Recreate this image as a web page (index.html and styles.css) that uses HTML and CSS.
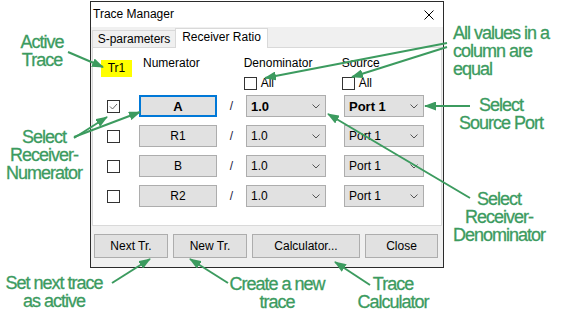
FILE: index.html
```html
<!DOCTYPE html>
<html lang="en">
<head>
    <meta charset="UTF-8">
    <title>Trace Manager</title>
    <link rel="stylesheet" href="styles.css">
</head>
<body>
<div class="stage">
    <div class="dialog">
        <div class="titlebar">
            <span class="title">Trace Manager</span>
            <svg class="close" width="10" height="10" viewBox="0 0 10 10">
                <path d="M0.5 0.5 L9.5 9.5 M9.5 0.5 L0.5 9.5" stroke="#000" stroke-width="1" fill="none"/>
            </svg>
        </div>

        <div class="tabs">
            <div class="tab">S-parameters</div>
            <div class="tab active">Receiver Ratio</div>
        </div>

        <div class="panel">
            <div class="head">
                <span class="trace-label">Tr1</span>
                <span class="col-num">Numerator</span>
                <div class="col col-den">
                    <span class="col-title">Denominator</span>
                    <label class="all"><span class="box"></span>All</label>
                </div>
                <div class="col col-src">
                    <span class="col-title">Source</span>
                    <label class="all"><span class="box"></span>All</label>
                </div>
            </div>

            <div class="rows">
                <div class="row selected">
                    <span class="box">
                        <svg width="11" height="11" viewBox="0 0 11 11"><path d="M2 5.5 L4.5 8 L9 3" stroke="#666" stroke-width="1" fill="none"/></svg>
                    </span>
                    <button class="recv focus">A</button>
                    <span class="slash">/</span>
                    <div class="select den"><span>1.0</span><svg class="chev" width="8" height="5" viewBox="0 0 8 5"><path d="M0.5 0.5 L4 4 L7.5 0.5" stroke="#555" fill="none"/></svg></div>
                    <div class="select src"><span>Port 1</span><svg class="chev" width="8" height="5" viewBox="0 0 8 5"><path d="M0.5 0.5 L4 4 L7.5 0.5" stroke="#555" fill="none"/></svg></div>
                </div>
                <div class="row">
                    <span class="box"></span>
                    <button class="recv">R1</button>
                    <span class="slash">/</span>
                    <div class="select den"><span>1.0</span><svg class="chev" width="8" height="5" viewBox="0 0 8 5"><path d="M0.5 0.5 L4 4 L7.5 0.5" stroke="#555" fill="none"/></svg></div>
                    <div class="select src"><span>Port 1</span><svg class="chev" width="8" height="5" viewBox="0 0 8 5"><path d="M0.5 0.5 L4 4 L7.5 0.5" stroke="#555" fill="none"/></svg></div>
                </div>
                <div class="row">
                    <span class="box"></span>
                    <button class="recv">B</button>
                    <span class="slash">/</span>
                    <div class="select den"><span>1.0</span><svg class="chev" width="8" height="5" viewBox="0 0 8 5"><path d="M0.5 0.5 L4 4 L7.5 0.5" stroke="#555" fill="none"/></svg></div>
                    <div class="select src"><span>Port 1</span><svg class="chev" width="8" height="5" viewBox="0 0 8 5"><path d="M0.5 0.5 L4 4 L7.5 0.5" stroke="#555" fill="none"/></svg></div>
                </div>
                <div class="row">
                    <span class="box"></span>
                    <button class="recv">R2</button>
                    <span class="slash">/</span>
                    <div class="select den"><span>1.0</span><svg class="chev" width="8" height="5" viewBox="0 0 8 5"><path d="M0.5 0.5 L4 4 L7.5 0.5" stroke="#555" fill="none"/></svg></div>
                    <div class="select src"><span>Port 1</span><svg class="chev" width="8" height="5" viewBox="0 0 8 5"><path d="M0.5 0.5 L4 4 L7.5 0.5" stroke="#555" fill="none"/></svg></div>
                </div>
            </div>
        </div>

        <div class="buttons">
            <button class="btn w-next">Next Tr.</button>
            <button class="btn w-new">New Tr.</button>
            <button class="btn w-calc">Calculator...</button>
            <button class="btn w-close">Close</button>
        </div>
    </div>

    <!-- callouts -->
    <div class="note n-active">Active<br>Trace</div>
    <div class="note n-num">Select<br>Receiver-<br>Numerator</div>
    <div class="note n-all">All values in a<br>column are<br>equal</div>
    <div class="note n-src">Select<br>Source Port</div>
    <div class="note n-den">Select<br>Receiver-<br>Denominator</div>
    <div class="note n-next">Set next trace<br>as active</div>
    <div class="note n-new">Create a new<br>trace</div>
    <div class="note n-calc">Trace<br>Calculator</div>

    <svg class="arrows" width="576" height="314" viewBox="0 0 576 314">
        <defs>
            <marker id="head" markerUnits="userSpaceOnUse" markerWidth="12" markerHeight="9" refX="11" refY="4.5" orient="auto">
                <path d="M0 0 L12 4.5 L0 9 Z" fill="#3c9b5f"/>
            </marker>
        </defs>
        <g stroke="#3c9b5f" stroke-width="2" fill="none" marker-end="url(#head)">
            <line x1="68" y1="52" x2="103" y2="67"/>
            <line x1="74" y1="138" x2="107" y2="117"/>
            <line x1="74" y1="137" x2="140" y2="112"/>
            <line x1="447" y1="43" x2="265" y2="78"/>
            <line x1="447" y1="47" x2="352" y2="77"/>
            <line x1="470" y1="106" x2="425" y2="106"/>
            <line x1="470" y1="198" x2="328" y2="114"/>
            <line x1="112" y1="283" x2="150" y2="259"/>
            <line x1="228" y1="283" x2="190" y2="259"/>
            <line x1="370" y1="285" x2="335" y2="262"/>
        </g>
    </svg>
</div>
</body>
</html>
```

FILE: styles.css
```css
body {
    margin: 0;
    background: #fff;
    font-family: "Liberation Sans", Arial, sans-serif;
    color: #000;
}

.stage {
    position: relative;
    width: 576px;
    height: 314px;
    overflow: hidden;
    padding-top: 1px;
    box-sizing: border-box;
}

/* dialog window */
.dialog {
    margin-left: 90px;
    width: 354px;
    height: 267px;
    box-sizing: border-box;
    border: 1px solid #2b2b2b;
    background: #f0f0f0;
    font-size: 12px;
}

.titlebar {
    display: flex;
    align-items: center;
    justify-content: space-between;
    height: 25px;
    padding: 0 9px 0 2px;
    background: #fff;
}

.title {
    line-height: 25px;
}

/* tabs */
.tabs {
    display: flex;
    align-items: flex-end;
    height: 19px;
    margin-top: 1px;
}

.tab {
    height: 17px;
    line-height: 16px;
    box-sizing: border-box;
    border: 1px solid #d9d9d9;
    border-bottom: none;
    text-align: center;
}

.tab:first-child {
    margin-left: 1px;
    width: 84px;
    background: #f0f0f0;
}

.tab.active {
    position: relative;
    z-index: 1;
    width: 93px;
    height: 20px;
    margin-left: -1px;
    margin-bottom: -1px;
    line-height: 17px;
    background: #fff;
}

.panel {
    margin: 0 1px;
    height: 179px;
    box-sizing: border-box;
    border: 1px solid #d9d9d9;
    background: #fff;
}

/* header */
.head {
    display: flex;
    align-items: flex-start;
    height: 42px;
}

.trace-label {
    margin: 12px 0 0 8px;
    width: 31px;
    height: 17px;
    line-height: 17px;
    text-align: center;
    background: #ffff00;
}

.col-num {
    margin: 8px 0 0 11px;
    line-height: 15px;
}

.col {
    display: flex;
    flex-direction: column;
    margin-top: 8px;
}

.col-den {
    margin-left: 44px;
    width: 98px;
}

.col-title {
    line-height: 15px;
}

.all {
    display: flex;
    align-items: center;
    gap: 4px;
    margin-top: 6px;
    line-height: 13px;
}

.box {
    display: inline-flex;
    align-items: center;
    justify-content: center;
    width: 13px;
    height: 13px;
    box-sizing: border-box;
    border: 1px solid #333;
    background: #fff;
}

/* receiver rows */
.rows {
    display: flex;
    flex-direction: column;
    gap: 8px;
    margin-top: 5px;
}

.row {
    display: flex;
    align-items: center;
    height: 22px;
    padding-left: 14px;
}

.recv {
    margin-left: 19px;
    width: 78px;
    height: 22px;
    padding: 0;
    font: inherit;
    border: 1px solid #adadad;
    background: #e1e1e1;
    color: #000;
}

.recv.focus {
    border: 2px solid #0078d7;
    font-weight: bold;
    font-size: 13px;
}

.slash {
    width: 29px;
    text-align: center;
    color: #1a1a40;
}

.select {
    display: flex;
    align-items: center;
    justify-content: space-between;
    width: 80px;
    height: 22px;
    box-sizing: border-box;
    padding: 0 5px 0 4px;
    border: 1px solid #adadad;
    background: #e1e1e1;
}

.select.src {
    margin-left: 18px;
}

.selected .select {
    font-weight: bold;
    font-size: 13px;
}

/* bottom buttons */
.buttons {
    display: flex;
    gap: 5px;
    margin-top: 8px;
    padding-left: 3px;
}

.btn {
    height: 24px;
    padding: 0;
    font: inherit;
    color: #000;
    border: 1px solid #adadad;
    background: #e1e1e1;
}

.w-next, .w-new { width: 74px; }
.w-calc { width: 108px; }
.w-close { width: 73px; }

/* annotations */
.note {
    position: absolute;
    color: #3c9b5f;
    font-size: 18px;
    line-height: 18px;
    letter-spacing: -1px;
    text-align: center;
    white-space: nowrap;
    -webkit-text-stroke: 0.3px #3c9b5f;
}

.n-active { left: 7px; top: 33px; width: 70px; }
.n-num { left: 0; top: 128px; width: 88px; }
.n-all { left: 453px; top: 24px; text-align: left; }
.n-src { left: 451px; top: 96px; width: 100px; }
.n-den { left: 444px; top: 190px; width: 110px; }
.n-next { left: 0; top: 274px; width: 108px; }
.n-new { left: 222px; top: 275px; width: 110px; }
.n-calc { left: 348px; top: 275px; width: 90px; }

.arrows {
    position: absolute;
    top: 0;
    left: 0;
    pointer-events: none;
}
```
